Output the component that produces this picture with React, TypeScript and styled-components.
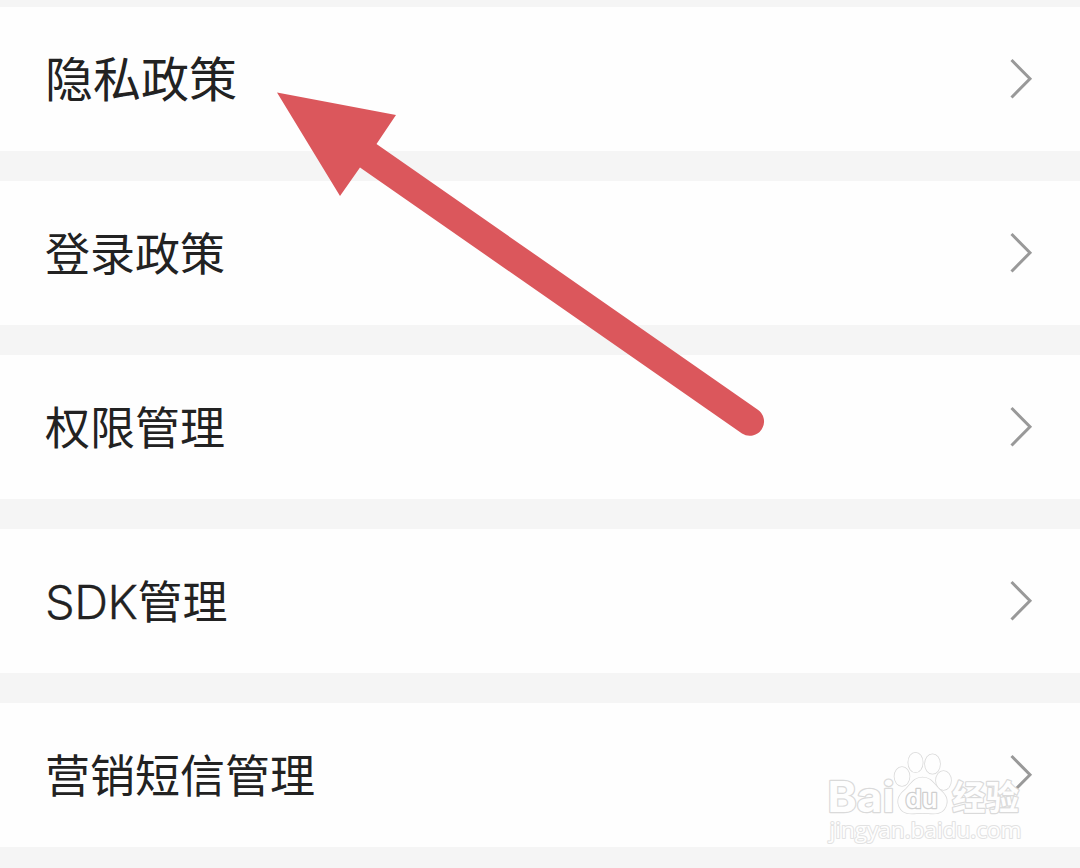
import React from "react";
import styled, { createGlobalStyle } from "styled-components";

const GlobalStyle = createGlobalStyle`
  body {
    margin: 0;
    background: #f5f5f5;
    overflow: hidden;
  }
`;

const Page = styled.main`
  position: relative;
  width: 1080px;
  height: 868px;
  box-sizing: border-box;
  padding-top: 7px;
  overflow: hidden;
  background: #f5f5f5;
`;

const List = styled.div`
  display: flex;
  flex-direction: column;
  gap: 30px;
`;

const Row = styled.div`
  display: flex;
  align-items: center;
  justify-content: space-between;
  height: 144px;
  box-sizing: border-box;
  padding: 0 47px 0 45px;
  background: #fefefe;
`;

const Label = styled.span<{ $large?: boolean }>`
  padding-bottom: ${({ $large }) => ($large ? "6px" : "3px")};
  color: #222;
  font-family: "Noto Sans CJK SC", sans-serif;
  font-size: ${({ $large }) => ($large ? "48px" : "45px")};
  line-height: 60px;
  white-space: nowrap;
`;

const Latin = styled.span`
  font-family: Inter, "Noto Sans CJK SC", sans-serif;
  font-size: 47px;
  font-weight: 300;
  line-height: 1;
  letter-spacing: -0.5px;
  -webkit-text-stroke: 0.3px #222;
`;

const ChevronIcon = styled.svg`
  width: 24px;
  height: 42px;
  fill: none;
  stroke: #999;
  stroke-width: 3;
`;

const Arrow = styled.svg`
  position: absolute;
  top: 0;
  left: 0;
  fill: #db575c;
  pointer-events: none;
`;

const Watermark = styled.svg`
  position: absolute;
  left: 820px;
  top: 745px;
  fill: #fefefe;
  stroke: #dadada;
  stroke-width: 1.6;
  stroke-linejoin: round;
  paint-order: stroke;
  pointer-events: none;
`;

const Brand = styled.text`
  font-family: Inter, sans-serif;
  font-weight: 700;
  stroke-width: 2.4;
`;

const BrandInner = styled.text`
  font-family: Inter, sans-serif;
  font-weight: 600;
  stroke: #cfcfcf;
  stroke-width: 2.6;
`;

const BrandCjk = styled.text`
  font-family: "Noto Sans CJK SC", sans-serif;
  font-weight: 700;
  stroke-width: 2.4;
`;

const Site = styled.text`
  font-family: "Open Sans", sans-serif;
  stroke: #e2e2e2;
  stroke-width: 2;
`;

interface Item {
  latin?: string;
  text: string;
  large?: boolean;
}

const items: Item[] = [
  { text: "隐私政策", large: true },
  { text: "登录政策" },
  { text: "权限管理" },
  { latin: "SDK", text: "管理" },
  { text: "营销短信管理" },
];

const Chevron = () => (
  <ChevronIcon viewBox="0 0 24 42">
    <path d="M2.5 2 21 20.700 2.500 39.500" />
  </ChevronIcon>
);

const App: React.FC = () => (
  <>
    <GlobalStyle />
    <Page>
      <List>
        {items.map(({ latin, text, large }) => (
          <Row key={latin ? latin + text : text}>
            <Label $large={large}>
              {latin && <Latin>{latin}</Latin>}
              {text}
            </Label>
            <Chevron />
          </Row>
        ))}
      </List>
      <Arrow width="1080" height="868" viewBox="0 0 1080 868">
        <path d="M277 92.500 396 115 376.500 144 757.500 409.500A14 14 0 0 1 742 433.500L360 167.500 340 196Z" />
      </Arrow>
      <Watermark width="220" height="105" viewBox="0 0 220 105">
        <Brand x="7.500" y="67" fontSize="42" textLength="67" lengthAdjust="spacingAndGlyphs">
          Bai
        </Brand>
        <ellipse cx="82" cy="31.500" rx="7.500" ry="9.500" />
        <ellipse cx="95.500" cy="17.500" rx="7.200" ry="9.800" />
        <ellipse cx="112.500" cy="19" rx="7.500" ry="9.800" />
        <ellipse cx="123.500" cy="35.500" rx="7.500" ry="9.500" />
        <path d="M102.500 32.500C94 32.500 91 39 86 44C80 49 76 54 79.500 62C84 71 93 68 102.500 68C112 68 121 71 125.500 62C129 54 125 49 119 44C114 39 111 32.500 102.500 32.500Z" />
        <BrandInner x="85.500" y="62.500" fontSize="26" textLength="32" lengthAdjust="spacingAndGlyphs">
          du
        </BrandInner>
        <BrandCjk x="132" y="65" fontSize="34" textLength="67" lengthAdjust="spacingAndGlyphs">
          经验
        </BrandCjk>
        <Site x="9.500" y="93" fontSize="22" textLength="192" lengthAdjust="spacingAndGlyphs">
          jingyan.baidu.com
        </Site>
      </Watermark>
    </Page>
  </>
);

export default App;
